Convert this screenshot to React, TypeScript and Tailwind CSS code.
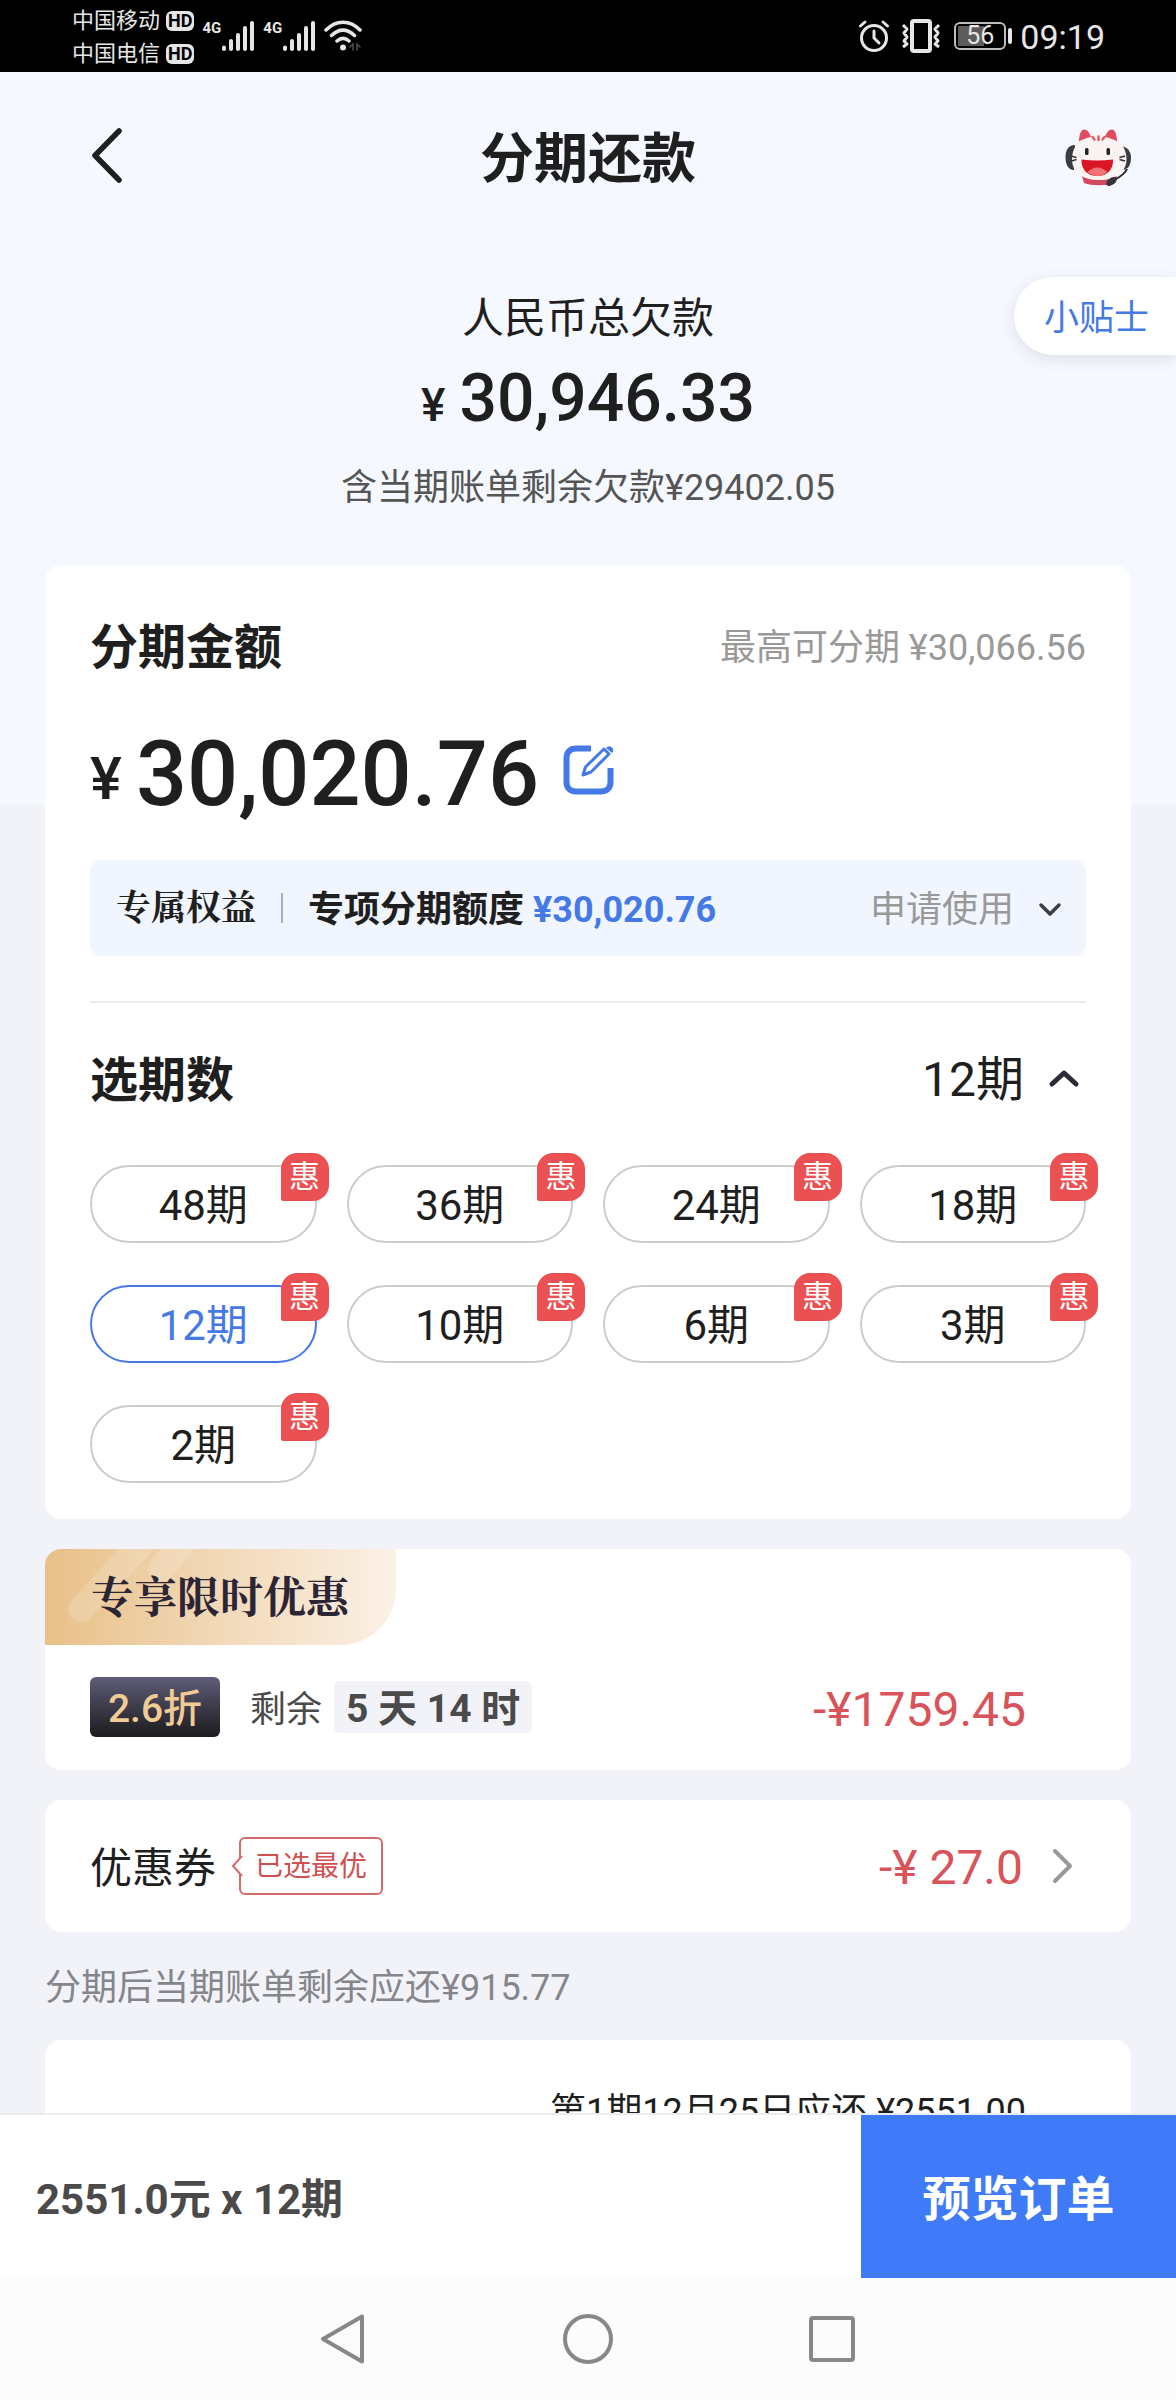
import { useState } from "react";

const TERMS = ["48期", "36期", "24期", "18期", "12期", "10期", "6期", "3期", "2期"];

function Carrier({ name }: { name: string }) {
  return (
    <div className="flex items-center gap-1.5">
      <span className="text-[22px] leading-[33px]">{name}</span>
      <span className="rounded-md bg-[#e6e6e6] px-0.5 font-[Roboto] text-[18px] leading-5 font-bold text-black">HD</span>
    </div>
  );
}

function Signal() {
  return (
    <div className="flex items-start">
      <span className="font-[Roboto] text-[15px] leading-4 font-bold">4G</span>
      <svg width="34" height="32" viewBox="0 0 34 32" stroke="#e6e6e6" strokeWidth="4" strokeLinecap="round" aria-hidden="true">
        <path d="M3 27.500V29M10 21V29M17 15V29M24 8V29M31 3V29" />
      </svg>
    </div>
  );
}

function StatusBar() {
  return (
    <div className="flex h-[72px] items-center justify-between bg-black pr-[71px] pl-[72px] text-[#e6e6e6]">
      <div className="flex items-center gap-2">
        <div className="flex flex-col pt-0.5">
          <Carrier name="中国移动" />
          <Carrier name="中国电信" />
        </div>
        <Signal />
        <Signal />
        <svg width="40" height="32" viewBox="0 0 40 32" fill="none" stroke="#e6e6e6" strokeWidth="3.500" strokeLinecap="round" aria-hidden="true">
          <path d="M2 10C12 -.5 26 -.5 36 10M7.500 15.500C15 8.500 23 8.500 30.500 15.500M13 21C17 17.500 21 17.500 25 21" />
          <circle cx="19" cy="27.500" r="3" fill="#e6e6e6" stroke="none" />
          <path d="M26 27L29 24V30M36 27L33 24V30" stroke="#4d4d4d" strokeWidth="1.500" />
        </svg>
      </div>
      <div className="flex items-center">
        <svg width="32" height="34" viewBox="0 0 32 34" fill="none" stroke="#e6e6e6" strokeWidth="3" strokeLinecap="round" aria-hidden="true">
          <circle cx="16" cy="19" r="12.500" />
          <path d="M16 12V19L21 24M2.500 7L7 3M29.500 7L25 3" />
        </svg>
        <svg width="42" height="34" viewBox="0 0 42 34" fill="none" stroke="#e6e6e6" strokeWidth="3" strokeLinejoin="round" className="ml-2.5" aria-hidden="true">
          <rect x="12" y="2" width="18" height="30" rx="2" strokeWidth="4" />
          <path d="M3 6L7 10L4 14L7 18L4 22L7 25L3 28M39 6L35 10L38 14L35 18L38 22L35 25L39 28" strokeWidth="3" />
        </svg>
        <div className="ml-3 flex h-[28px] w-[52px] items-center rounded-md border-2 border-[#bdbdbd] p-0.5">
          <div className="relative flex h-full w-full items-center justify-center">
            <span className="absolute inset-y-0 left-0 w-[26px] bg-[#5c5c5c]" />
            <span className="relative font-[Roboto] text-[25px] leading-6">56</span>
          </div>
        </div>
        <span className="ml-0.5 h-4 w-1 rounded-sm bg-[#e6e6e6]" />
        <span className="ml-2 pt-0.5 font-[Roboto] text-[34px] leading-10">09:19</span>
      </div>
    </div>
  );
}

function Mascot() {
  return (
    <svg width="68" height="60" viewBox="0 0 68 60" aria-hidden="true">
      <path d="M11 17C4 17 1.500 23 1.500 29C1.500 36 4 42 10 42Z" fill="#3b3b42" />
      <path d="M58 18C65 20 67 25 67 30C67 37 64 42 58 42Z" fill="#3b3b42" />
      <path d="M18 48H53L51 55C43 58 27 58 20 55Z" fill="#d4485c" />
      <path d="M35 6.500C51 6.500 62.500 17 62.500 31C62.500 44 52 52 35 52C18 52 8 44 8 31C8 17 19 6.500 35 6.500Z" fill="#faf3f1" />
      <path d="M15 13.500C15 7 17 1.500 20 1.500C23.500 1.500 25.500 5 27 9C22 10 18 11.500 15 13.500ZM53 13.500C53 7 51 1.500 48 1.500C44.500 1.500 42.500 5 41 9C46 10 50 11.500 53 13.500Z" fill="#df4c60" />
      <path d="M34.500 8.500V12M28.500 9L30.500 11.500M40.500 9L38.500 11.500" stroke="#d9606a" strokeWidth="2.500" strokeLinecap="round" />
      <rect x="21" y="20" width="3.500" height="7" rx="1.500" fill="#222" />
      <rect x="42.500" y="20" width="3.500" height="7" rx="1.500" fill="#222" />
      <path d="M17.500 31.500Q33 33.500 49 31.500C49.500 42 43 48 33.500 48C24 48 17 42 17.500 31.500Z" fill="#da1524" />
      <path d="M23.500 44Q33 35 43.500 44Q39 48 33.500 48Q28 48 23.500 44Z" fill="#f07272" />
      <path d="M7 28L12.500 29.500M7.500 33L12.500 31.500M61 28L55.500 29.500M61 33L55.500 31.500" stroke="#333" strokeWidth="1.500" />
      <path d="M63 41C61 46 56 49 50 52" stroke="#26262b" strokeWidth="2" fill="none" />
      <ellipse cx="47.500" cy="53.500" rx="6" ry="3.500" fill="#35353b" transform="rotate(-35 47.500 53.500)" />
    </svg>
  );
}

function EditIcon() {
  return (
    <svg width="52" height="50" viewBox="0 0 52 50" fill="none" stroke="#457ae6" aria-hidden="true">
      <path d="M28 3.500H13C7 3.500 3.500 7 3.500 13V37C3.500 43 7 46.500 13 46.500H38C44 46.500 47.500 43 47.500 37V23" strokeWidth="6" />
      <path d="M20 30L22.500 22L41 4L46 9L28 27Z" strokeWidth="3" strokeLinejoin="round" />
      <path d="M43 3Q46 0 49 2.500Q51.500 5.500 49 8Z" fill="#457ae6" stroke="none" />
    </svg>
  );
}

export default function App() {
  const [term, setTerm] = useState("12期");
  return (
    <div className="flex h-screen flex-col overflow-hidden bg-[#f2f3f8] font-[Roboto,'Noto_Sans_CJK_SC',sans-serif] text-[#1f1f1f]">
      <StatusBar />
      <main className="min-h-0 flex-1 overflow-hidden bg-[linear-gradient(#f5f8ff_732px,#f2f3f8_732px)]">
        <header className="flex h-[172px] items-center justify-between pr-11 pl-[90px]">
          <button aria-label="返回" className="w-[68px] pb-1">
            <svg width="34" height="58" viewBox="0 0 34 58" fill="none" stroke="#1f1f1f" strokeWidth="5.500" strokeLinecap="round" strokeLinejoin="round" aria-hidden="true">
              <path d="M29 4L5 28.500L29 53" />
            </svg>
          </button>
          <h1 className="pt-1 pr-[46px] text-[54px] leading-[72px] font-bold">分期还款</h1>
          <button aria-label="在线客服"><Mascot /></button>
        </header>

        <section className="relative flex flex-col items-center pt-[45px] text-center">
          <h2 className="text-[42px] leading-[60px] font-normal">人民币总欠款</h2>
          <p className="mt-2.5 flex items-baseline gap-3.5 text-[66px] leading-20 font-medium">
            <span className="text-[46px] leading-none">¥</span>30,946.33
          </p>
          <p className="mt-6 text-[36px] leading-[50px] text-[#555]">含当期账单剩余欠款¥29402.05</p>
          <button className="absolute top-[33px] right-0 h-[78px] rounded-l-full bg-white pt-1.5 pr-[27px] pl-[30px] text-[35px] text-[#457ae6] shadow-[0_4px_16px_rgba(0,0,0,0.1)]">小贴士</button>
        </section>

        <div className="flex flex-col px-[45px] pt-[52px]">
          <section className="rounded-2xl bg-white px-[45px] pt-[47px] pb-9">
            <div className="flex items-center justify-between">
              <h2 className="text-[48px] leading-[72px] font-bold">分期金额</h2>
              <span className="text-[36px] text-[#999]">最高可分期 ¥30,066.56</span>
            </div>
            <div className="mt-[37px] flex items-center">
              <p className="flex items-center gap-3.5 text-[90px] leading-[108px] font-medium">
                <span className="pt-2 text-[60px] leading-none">¥</span>30,020.76
              </p>
              <button aria-label="修改分期金额" className="mb-2.5 ml-6"><EditIcon /></button>
            </div>
            <div className="mt-[31px] flex h-24 items-center rounded-xl bg-[#f1f5fe] pr-6 pl-[26px]">
              <span className="pb-1.5 font-['Noto_Serif_CJK_SC','Noto_Serif_SC','Noto_Sans_CJK_SC',serif] text-[35px] font-bold">专属权益</span>
              <span className="mx-[25px] h-[30px] w-0.5 bg-[#aab0bd]" />
              <span className="pt-1 text-[36px] font-bold">专项分期额度 <span className="text-[#457ae6]">¥30,020.76</span></span>
              <button className="ml-auto flex items-center gap-6 pt-1 text-[36px] text-[#999]">
                申请使用
                <svg width="24" height="16" viewBox="0 0 24 16" fill="none" stroke="#3d3d42" strokeWidth="3.500" strokeLinecap="round" strokeLinejoin="round" aria-hidden="true"><path d="M3 3L12 12L21 3" /></svg>
              </button>
            </div>
            <div className="mt-[45px] border-t-2 border-[#ececee]" />
            <div className="mt-[41px] flex items-center justify-between">
              <h2 className="pt-0.5 text-[48px] leading-[70px] font-bold">选期数</h2>
              <button className="flex items-center gap-6 pr-1.5 text-[48px] leading-[72px]">
                {term}
                <svg width="32" height="22" viewBox="0 0 32 22" fill="none" stroke="#2b2b35" strokeWidth="5" strokeLinecap="round" strokeLinejoin="round" aria-hidden="true"><path d="M4 15L16 4L28 15" /></svg>
              </button>
            </div>
            <div className="mt-[49px] grid grid-cols-4 gap-x-[30px] gap-y-[42px]">
              {TERMS.map((t) => (
                <button
                  key={t}
                  aria-pressed={t === term}
                  onClick={() => setTerm(t)}
                  className={`relative h-[78px] rounded-full border-2 pt-1 text-[42px] leading-none ${t === term ? "border-[#457ae6] text-[#457ae6]" : "border-[#ccc]"}`}
                >
                  {t}
                  <span className="absolute -top-3.5 -right-3.5 flex size-12 items-center justify-center rounded-2xl rounded-bl-xs bg-[#eb5052] pb-0.5 text-[31px] text-white">惠</span>
                </button>
              ))}
            </div>
          </section>

          <section className="mt-[30px] overflow-hidden rounded-2xl bg-white">
            <div className="relative flex h-24 w-[351px] items-center overflow-hidden rounded-br-[56px] bg-linear-to-r from-[#e8c088] to-[#fbf1e6] pl-[46px]">
              <svg className="absolute inset-0" width="351" height="96" stroke="#fff" strokeOpacity=".16" strokeWidth="26" strokeLinecap="round" aria-hidden="true">
                <path d="M36 60L110 -20M116 20L150 -20" />
              </svg>
              <h2 className="relative pb-1 font-['Noto_Serif_CJK_SC','Noto_Serif_SC','Noto_Sans_CJK_SC',serif] text-[43px] leading-[60px] font-bold whitespace-nowrap text-[#2b2536]">专享限时优惠</h2>
            </div>
            <div className="flex items-center pt-8 pr-[105px] pb-[33px] pl-[45px]">
              <span className="flex h-[60px] w-[130px] items-center justify-center rounded-md bg-linear-to-b from-[#5f5d78] to-[#1c1c1f] pt-1 text-[39px] font-medium text-[#f0cb95]">2.6折</span>
              <span className="ml-[30px] pt-1.5 text-[36px] text-[#4a4a4a]">剩余</span>
              <span className="ml-3 rounded-md bg-[#f2f3f8] px-3 pt-1 text-[39px] leading-[48px] font-bold text-[#4a4a4a]">5 天 14 时</span>
              <span className="ml-auto pt-1.5 text-[48px] leading-[54px] text-[#d9535a]">-¥1759.45</span>
            </div>
          </section>

          <section className="mt-[30px] flex h-[132px] items-center rounded-2xl bg-white pr-14 pl-[45px]">
            <h2 className="pt-1 text-[42px] font-normal">优惠券</h2>
            <span className="relative ml-[23px] flex h-[58px] items-center rounded-md border-2 border-[#d66a6a] px-3.5 pt-0.5 text-[28px] text-[#d0504f]">
              已选最优
              <svg className="absolute top-[17px] -left-2.5" width="12" height="20" viewBox="0 0 12 20" fill="#fff" stroke="#d66a6a" strokeWidth="2" aria-hidden="true"><path d="M11 0L2 10L11 20" /></svg>
            </span>
            <button aria-label="更换优惠券" className="ml-auto flex items-center gap-[28px] text-[48px] leading-[60px] text-[#d9535a]">
              <span className="pt-1">-¥ 27.0</span>
              <svg width="24" height="36" viewBox="0 0 24 36" fill="none" stroke="#999" strokeWidth="4" strokeLinecap="round" strokeLinejoin="round" aria-hidden="true"><path d="M4 3L19 18L4 33" /></svg>
            </button>
          </section>

          <p className="mt-[30px] text-[36px] leading-[52px] text-[#85858c]">分期后当期账单剩余应还¥915.77</p>

          <section className="mt-[26px] rounded-2xl bg-white pt-[45px] pr-[105px] pb-20 text-right">
            <p className="text-[36px] leading-[54px]">第1期12月25日应还 ¥2551.00</p>
          </section>
        </div>
      </main>

      <footer className="flex h-[165px] shrink-0 items-stretch border-t-2 border-[#ececee] bg-white">
        <p className="flex flex-1 items-center pt-1.5 pl-9 text-[42px] font-bold text-[#4a4a4a]">2551.0元 x 12期</p>
        <button className="w-[315px] bg-[#3f7af8] pt-1.5 text-[48px] font-bold text-white">预览订单</button>
      </footer>

      <nav className="flex h-[122px] shrink-0 items-center justify-center gap-[192px] bg-[#fcfcfc]">
        <button aria-label="后退">
          <svg width="52" height="52" viewBox="0 0 52 52" fill="none" stroke="#888" strokeWidth="4" strokeLinejoin="round" aria-hidden="true"><path d="M44 3.500V48.500L5 26Z" /></svg>
        </button>
        <button aria-label="主屏幕">
          <svg width="52" height="52" viewBox="0 0 52 52" fill="none" stroke="#888" strokeWidth="4" aria-hidden="true"><circle cx="26" cy="26" r="23" /></svg>
        </button>
        <button aria-label="最近任务">
          <svg width="52" height="52" viewBox="0 0 52 52" fill="none" stroke="#888" strokeWidth="4" aria-hidden="true"><rect x="5" y="5" width="42" height="42" rx="2" /></svg>
        </button>
      </nav>
    </div>
  );
}
